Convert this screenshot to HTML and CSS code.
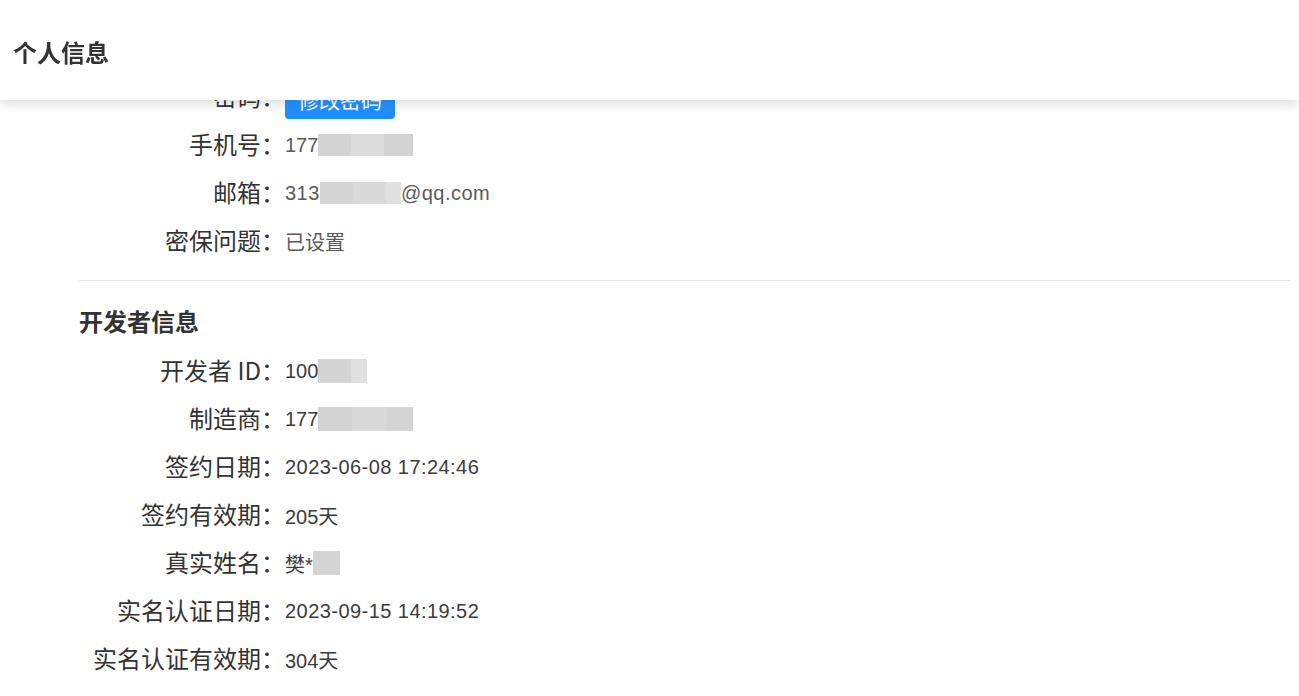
FILE: index.html
```html
<!DOCTYPE html>
<html lang="zh-CN">
<head>
<meta charset="utf-8">
<title>个人信息</title>
<link rel="stylesheet" href="styles.css">
</head>
<body>
<header class="topbar">
  <h1 class="topbar-title">个人信息</h1>
</header>
<main class="content">
  <section class="info-group">
    <div class="row">
      <span class="label">密码：</span>
      <span class="value"><button class="btn-primary" type="button">修改密码</button></span>
    </div>
    <div class="row">
      <span class="label">手机号：</span>
      <span class="value muted">177<span class="mask"><i class="m m1"></i><i class="m m2"></i><i class="m m3"></i></span></span>
    </div>
    <div class="row">
      <span class="label">邮箱：</span>
      <span class="value muted"><span class="wide">313</span><span class="mask"><i class="m e1"></i><i class="m e2"></i><i class="m e3"></i></span><span class="wide">@qq.com</span></span>
    </div>
    <div class="row">
      <span class="label">密保问题：</span>
      <span class="value muted">已设置</span>
    </div>
  </section>
  <hr class="divider">
  <section class="info-group">
    <h2 class="section-title">开发者信息</h2>
    <div class="row">
      <span class="label">开发者 ID：</span>
      <span class="value">100<span class="mask tall"><i class="m d1"></i><i class="m d2"></i></span></span>
    </div>
    <div class="row">
      <span class="label">制造商：</span>
      <span class="value">177<span class="mask tall"><i class="m c1"></i><i class="m c2"></i><i class="m c3"></i></span></span>
    </div>
    <div class="row">
      <span class="label">签约日期：</span>
      <span class="value datetime">2023-06-08 17:24:46</span>
    </div>
    <div class="row">
      <span class="label">签约有效期：</span>
      <span class="value">205天</span>
    </div>
    <div class="row">
      <span class="label">真实姓名：</span>
      <span class="value">樊*<span class="mask tall"><i class="m n1"></i></span></span>
    </div>
    <div class="row">
      <span class="label">实名认证日期：</span>
      <span class="value datetime">2023-09-15 14:19:52</span>
    </div>
    <div class="row">
      <span class="label">实名认证有效期：</span>
      <span class="value">304天</span>
    </div>
  </section>
</main>
</body>
</html>
```
FILE: styles.css
```css
html, body {
  margin: 0;
  padding: 0;
  background: #ffffff;
}
body {
  font-family: "Liberation Sans", "Noto Sans CJK SC", sans-serif;
  color: #333333;
}
.topbar {
  position: fixed;
  top: 0;
  left: 0;
  right: 0;
  height: 100px;
  background: #ffffff;
  box-shadow: 0 3px 12px rgba(0, 0, 0, 0.16);
  z-index: 10;
  display: flex;
  align-items: center;
  padding: 4px 13px 0;
  box-sizing: border-box;
}
.topbar-title {
  margin: 0;
  font-family: "Noto Sans CJK SC", sans-serif;
  font-size: 24px;
  font-weight: 700;
  color: #333333;
  line-height: 1;
}
.content {
  padding: 71px 9px 20px 79px;
}
.info-group {
  display: flex;
  flex-direction: column;
}
.row {
  display: grid;
  grid-template-columns: 206px 1fr;
  align-items: center;
  height: 48px;
}
.label {
  text-align: right;
  font-family: "Noto Sans CJK SC", sans-serif;
  font-size: 24px;
  color: #333333;
  white-space: nowrap;
}
.value {
  display: flex;
  align-items: center;
  padding-top: 4px;
  font-size: 20px;
  color: #3c3c3c;
  white-space: nowrap;
}
.value.muted {
  color: #5a5a5a;
}
.value.datetime {
  letter-spacing: 0.45px;
}
.wide {
  letter-spacing: 0.5px;
}
.mask {
  display: inline-flex;
  height: 22px;
}
.mask.tall {
  height: 24px;
}
.m {
  display: block;
  height: 100%;
}
.m1 { width: 33px; background: #d3d3d3; }
.m2 { width: 33px; background: #dcdcdc; }
.m3 { width: 29px; background: #d3d3d3; }
.e1 { width: 33px; background: #d6d6d6; }
.e2 { width: 33px; background: #dadada; }
.e3 { width: 15px; background: #e0e0e0; }
.d1 { width: 33px; background: #d3d3d3; }
.d2 { width: 16px; background: #dfdfdf; }
.c1 { width: 34px; background: #d2d2d2; }
.c2 { width: 35px; background: #d9d9d9; }
.c3 { width: 26px; background: #d4d4d4; }
.n1 { width: 27px; background: #d4d4d4; }
.btn-primary {
  margin-top: 4px;
  height: 40px;
  padding: 0 13px;
  border: none;
  border-radius: 4px;
  background: linear-gradient(#3aa0ff, #1a8cff);
  color: #ffffff;
  font-family: "Noto Sans CJK SC", sans-serif;
  font-size: 21px;
  cursor: pointer;
}
.divider {
  margin: 17px 0 0;
  border: none;
  border-top: 1px solid #e6e6e6;
  height: 0;
}
.section-title {
  margin: 16px 0 0;
  height: 48px;
  line-height: 48px;
  font-family: "Noto Sans CJK SC", sans-serif;
  font-size: 24px;
  font-weight: 700;
  color: #333333;
}
```
